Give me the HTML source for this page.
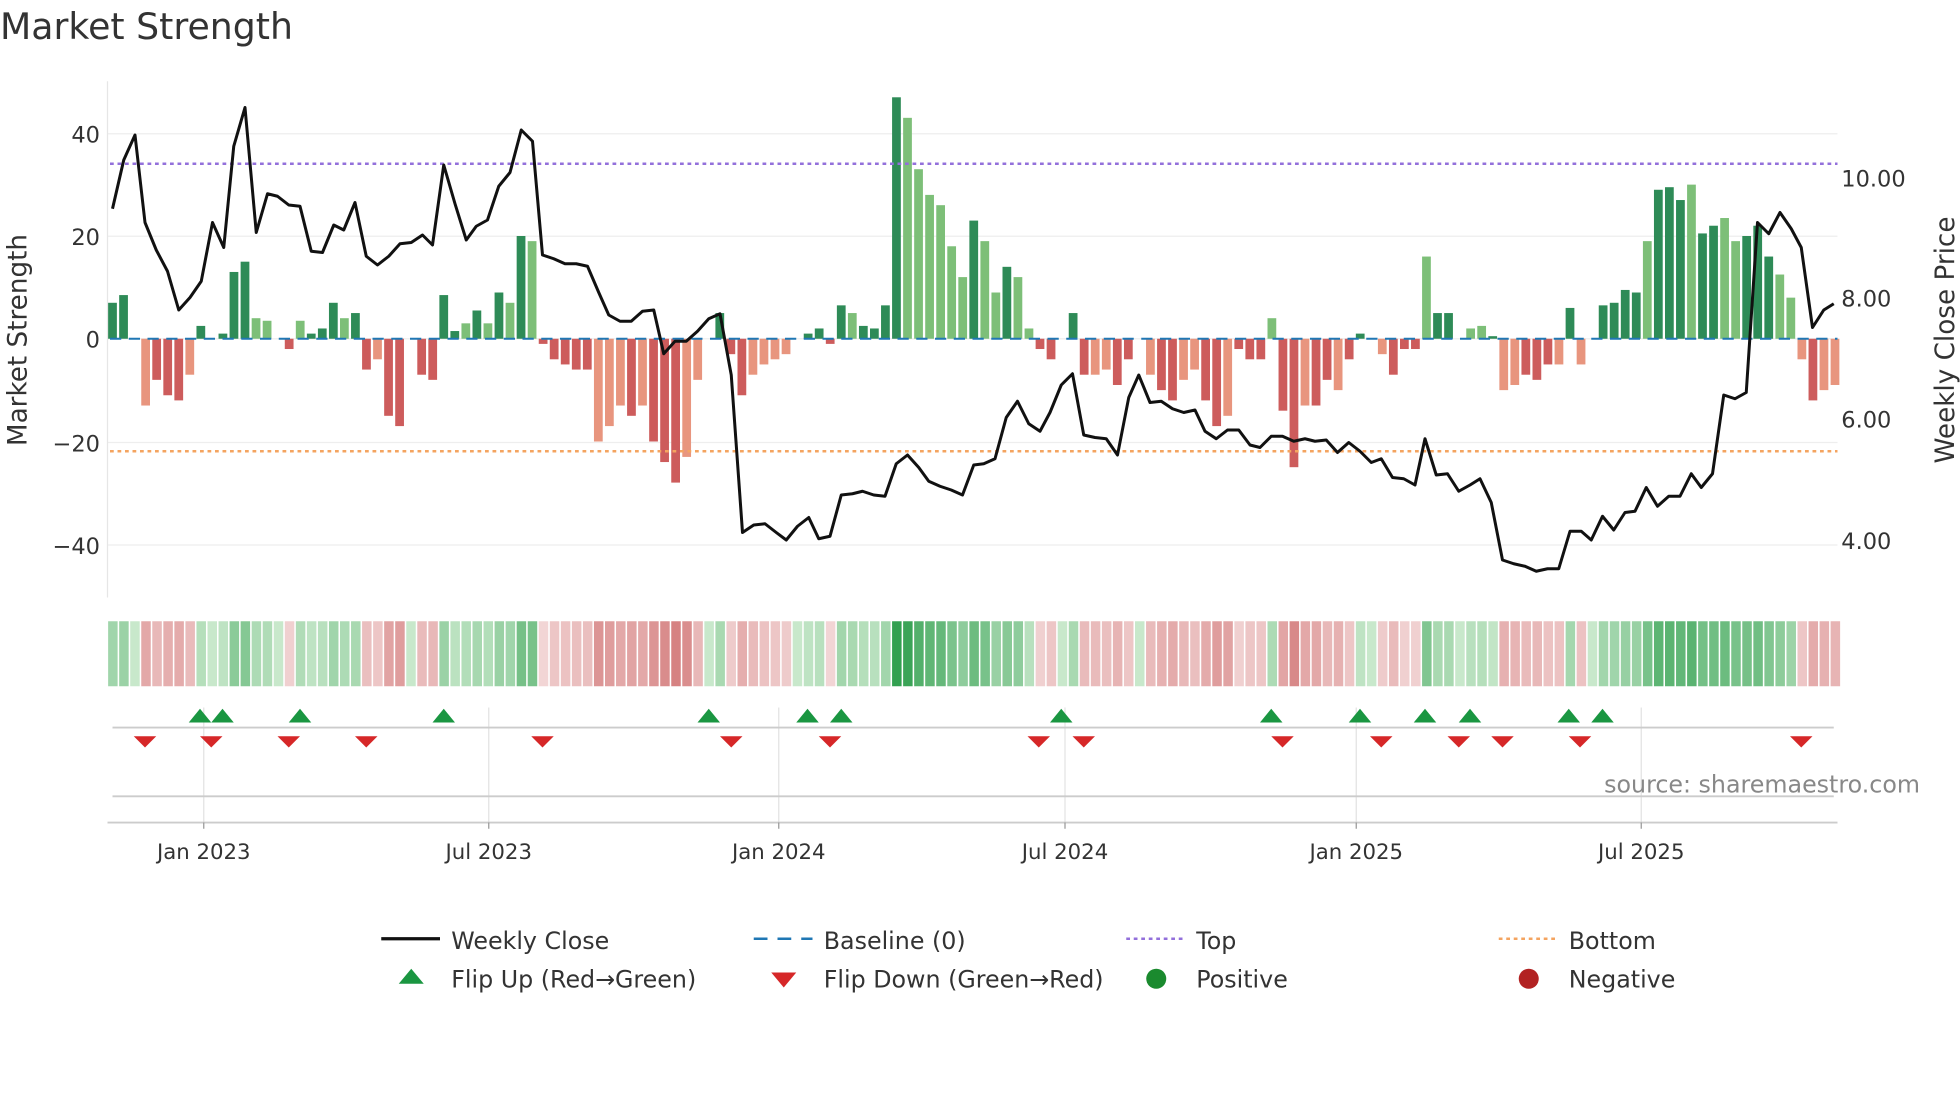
<!DOCTYPE html>
<html><head><meta charset="utf-8"><style>
html,body{margin:0;padding:0;background:#fff;}
svg{display:block;font-family:"DejaVu Sans","Liberation Sans",sans-serif;}
</style></head><body>
<svg id="s" width="1960" height="1102" viewBox="0 0 1568 881.6" xmlns="http://www.w3.org/2000/svg">
<text x="0" y="31" font-size="29" fill="#333">Market Strength</text>
<g stroke="#eee" stroke-width="1">
<line x1="86" x2="1470" y1="107" y2="107"/><line x1="86" x2="1470" y1="189" y2="189"/>
<line x1="86" x2="1470" y1="271" y2="271"/><line x1="86" x2="1470" y1="354" y2="354"/>
<line x1="86" x2="1470" y1="436" y2="436"/>
</g>
<line x1="86" x2="86" y1="65" y2="478" stroke="#e6e6e6"/>
<g font-size="18" fill="#333" text-anchor="end">
<text x="80" y="114">40</text><text x="80" y="196">20</text><text x="80" y="278">0</text>
<text x="80" y="361">−20</text><text x="80" y="443">−40</text>
</g>
<g font-size="18" fill="#333">
<text x="1473" y="149">10.00</text><text x="1473" y="245">8.00</text>
<text x="1473" y="342">6.00</text><text x="1473" y="439">4.00</text>
</g>
<text transform="translate(21,272) rotate(-90)" font-size="21" fill="#333" text-anchor="middle">Market Strength</text>
<text transform="translate(1563,272) rotate(-90)" font-size="21" fill="#333" text-anchor="middle">Weekly Close Price</text>
<g id="bars"></g>
<line x1="88" x2="1470" y1="271" y2="271" stroke="#1f77b4" stroke-width="1.6" stroke-dasharray="9,6"/>
<line x1="88" x2="1470" y1="131" y2="131" stroke="#9370db" stroke-width="2" stroke-dasharray="3,3"/>
<line x1="88" x2="1470" y1="361" y2="361" stroke="#f4a460" stroke-width="2" stroke-dasharray="3,3"/>
<polyline id="price" fill="none" stroke="#111" stroke-width="2.4" stroke-linejoin="round"/>
<g id="heat"></g>
<g stroke="#e3e3e3"><line x1="163" x2="163" y1="566" y2="658"/><line x1="391" x2="391" y1="566" y2="658"/><line x1="623" x2="623" y1="566" y2="658"/><line x1="852" x2="852" y1="566" y2="658"/><line x1="1085" x2="1085" y1="566" y2="658"/><line x1="1313" x2="1313" y1="566" y2="658"/></g>
<line x1="90" x2="1467" y1="582" y2="582" stroke="#ccc" stroke-width="1.5"/>
<line x1="90" x2="1467" y1="637" y2="637" stroke="#ccc" stroke-width="1.5"/>
<line x1="86" x2="1470" y1="658" y2="658" stroke="#ccc" stroke-width="1.5"/>
<g id="marks"></g>
<text x="1536" y="634" font-size="19" fill="#888" text-anchor="end">source: sharemaestro.com</text>
<g stroke="#999"><line x1="163" x2="163" y1="658" y2="663"/><line x1="391" x2="391" y1="658" y2="663"/><line x1="623" x2="623" y1="658" y2="663"/><line x1="852" x2="852" y1="658" y2="663"/><line x1="1085" x2="1085" y1="658" y2="663"/><line x1="1313" x2="1313" y1="658" y2="663"/></g>
<g font-size="17" fill="#333" text-anchor="middle">
<text x="163" y="687">Jan 2023</text><text x="391" y="687">Jul 2023</text><text x="623" y="687">Jan 2024</text>
<text x="852" y="687">Jul 2024</text><text x="1085" y="687">Jan 2025</text><text x="1313" y="687">Jul 2025</text>
</g>
<g font-size="19" fill="#333">
<line x1="305" x2="352" y1="751" y2="751" stroke="#111" stroke-width="2.6"/><text x="361" y="759">Weekly Close</text>
<line x1="603" x2="650" y1="751" y2="751" stroke="#1f77b4" stroke-width="2" stroke-dasharray="11,8"/><text x="659" y="759">Baseline (0)</text>
<line x1="901" x2="948" y1="751" y2="751" stroke="#9370db" stroke-width="2" stroke-dasharray="3,3"/><text x="957" y="759">Top</text>
<line x1="1199" x2="1246" y1="751" y2="751" stroke="#f4a460" stroke-width="2" stroke-dasharray="3,3"/><text x="1255" y="759">Bottom</text>
<polygon points="319,787 329,775 339,787" fill="#1a9641"/><text x="361" y="790">Flip Up (Red→Green)</text>
<polygon points="617,778 637,778 627,790" fill="#d62728"/><text x="659" y="790">Flip Down (Green→Red)</text>
<circle cx="925" cy="783" r="8" fill="#1a8a2e"/><text x="957" y="790">Positive</text>
<circle cx="1223" cy="783" r="8" fill="#b22222"/><text x="1255" y="790">Negative</text>
</g>
</svg>
<script>
var V=[7,8.5,0,-13,-8,-11,-12,-7,2.5,0,1,13,15,4,3.5,0,-2,3.5,1,2,7,4,5,-6,-4,-15,-17,0,-7,-8,8.5,1.5,3,5.5,3,9,7,20,19,-1,-4,-5,-6,-6,-20,-17,-13,-15,-13,-20,-24,-28,-23,-8,0,5,-3,-11,-7,-5,-4,-3,0,1,2,-1,6.5,5,2.5,2,6.5,47,43,33,28,26,18,12,23,19,9,14,12,2,-2,-4,0,5,-7,-7,-6,-9,-4,0,-7,-10,-12,-8,-6,-12,-17,-15,-2,-4,-4,4,-14,-25,-13,-13,-8,-10,-4,1,0,-3,-7,-2,-2,16,5,5,0,2,2.5,0.5,-10,-9,-7,-8,-5,-5,6,-5,0,6.5,7,9.5,9,19,29,29.5,27,30,20.5,22,23.5,19,20,22,16,12.5,8,-4,-12,-10,-9];
var L={};[3,7,13,14,17,21,24,32,34,36,38,44,45,46,48,52,53,58,59,60,61,67,72,73,74,75,76,77,79,80,82,83,89,90,94,97,98,101,105,108,111,114,115,119,123,124,126,127,131,133,139,143,146,147,151,152,153,155,156].forEach(function(i){L[i]=1});
var ns="http://www.w3.org/2000/svg",b=document.getElementById('bars'),h=document.getElementById('heat'),m=document.getElementById('marks');
var dx=(1468-90)/(V.length-1);
function el(t,a,p){var e=document.createElementNS(ns,t);for(var k in a)e.setAttribute(k,a[k]);p.appendChild(e);return e;}
function mix(a,c,t){return 'rgb('+a.map(function(v,i){return Math.round(v+(c[i]-v)*t)}).join(',')+')';}
V.forEach(function(v,i){var x=90+i*dx;var y=271-v*4.11;var pos=v>=0;
var col=pos?(L[i]?'#7dbf78':'#2e8b57'):(L[i]?'#e8957e':'#cd5c5c');
if(v!=0)el('rect',{x:x-3.5,y:Math.min(y,271),width:7,height:Math.abs(v*4.11),fill:col},b);
var t=Math.min(Math.abs(v)/47,1);t=Math.pow(t,0.7);
var c=pos?mix([200,232,203],[50,160,80],t):mix([245,222,222],[200,90,90],t);
el('rect',{x:x-3.5,y:497,width:7.6,height:52,fill:c},h);});
var P="90,167 99,128 108,108 116,178 125,200 134,217 143,248 152,238 161,225 170,178 179,198 187,117 196,86 205,186 214,155 222,157 231,164 240,165 249,201 258,202 267,180 275,184 284,162 293,205 302,212 311,205 320,195 329,194 338,188 346,196 355,132 364,163 373,192 381,181 390,176 399,149 408,138 417,104 426,113 434,204 443,207 452,211 461,211 470,213 479,234 487,252 496,257 505,257 514,249 523,248 531,283 540,273 549,273 558,265 567,255 576,251 585,300 594,426 603,420 612,419 621,426 629,432 638,421 647,414 655,431 664,429 673,396 682,395 690,393 699,396 708,397 717,371 726,364 735,374 743,385 752,389 761,392 770,396 779,372 787,371 796,367 805,334 814,321 823,339 832,345 840,330 849,308 858,299 867,348 876,350 885,351 894,364 903,318 911,300 920,322 929,321 938,327 947,330 956,328 964,345 973,351 982,344 991,344 1000,356 1008,358 1017,349 1026,349 1035,353 1044,351 1052,353 1061,352 1070,362 1079,354 1088,361 1097,370 1105,367 1114,382 1123,383 1132,388 1140,351 1149,380 1158,379 1167,393 1176,388 1184,383 1193,402 1202,448 1211,451 1220,453 1229,457 1238,455 1247,455 1256,425 1265,425 1273,432 1282,413 1291,424 1300,410 1308,409 1317,390 1326,405 1335,397 1344,397 1353,379 1361,390 1370,379 1379,316 1388,319 1397,314 1406,178 1415,187 1424,170 1433,183 1441,198 1450,262 1459,248 1467,243";
document.getElementById('price').setAttribute('points',P);
[160,178,240,355,567,646,673,849,1017,1088,1140,1176,1255,1282].forEach(function(x){el('polygon',{points:(x-9)+',578 '+x+',567 '+(x+9)+',578',fill:'#1a9641'},m);});
[116,169,231,293,434,585,664,831,867,1026,1105,1167,1202,1264,1441].forEach(function(x){el('polygon',{points:(x-9)+',589 '+(x+9)+',589 '+x+',598',fill:'#d62728'},m);});
</script>
</body></html>
